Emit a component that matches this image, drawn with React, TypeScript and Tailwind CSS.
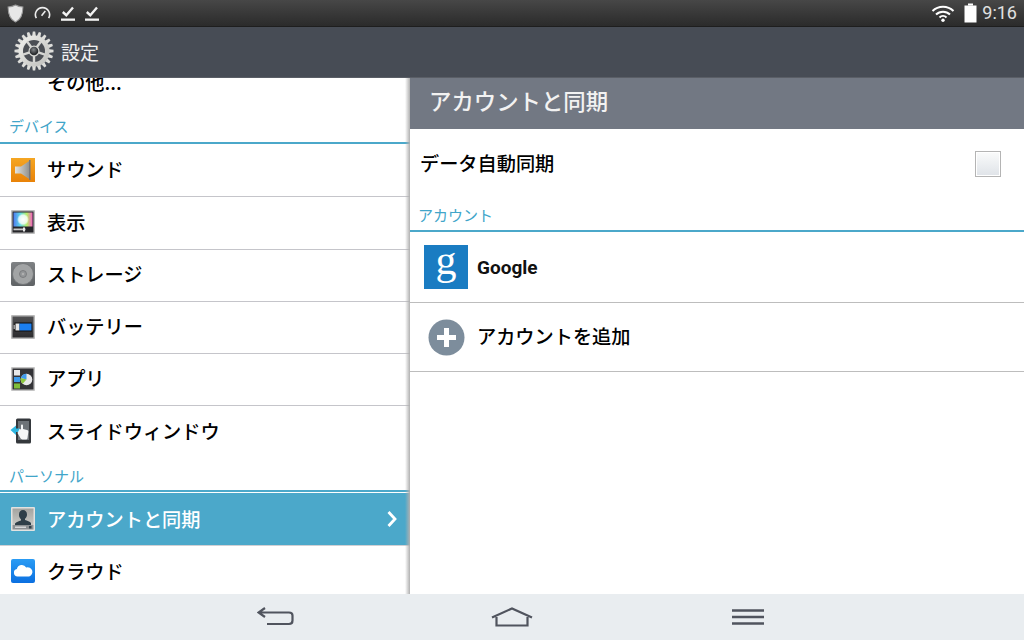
import { ReactNode } from "react"

const jp = "font-['Noto_Sans_CJK_JP','Noto_Sans',sans-serif]"

function IconFrame({ children }: { children: ReactNode }) {
  return (
    <svg width="26" height="26" viewBox="0 0 26 26" className="shrink-0">
      {children}
    </svg>
  )
}

function SoundIcon() {
  return (
    <IconFrame>
      <defs>
        <linearGradient id="snd" x1="0" y1="0" x2="0" y2="1">
          <stop offset="0" stopColor="#f5a623" />
          <stop offset="1" stopColor="#e98208" />
        </linearGradient>
        <linearGradient id="cone" x1="0" y1="0" x2="1" y2="0">
          <stop offset="0" stopColor="#e4e4e0" />
          <stop offset="1" stopColor="#8e8e8a" />
        </linearGradient>
      </defs>
      <rect x="1" y="1" width="24" height="24" fill="url(#snd)" />
      <path d="M5 9.500h6l9-6v19l-9-6H5z" fill="url(#cone)" />
      <rect x="19" y="3" width="1.500" height="20" fill="#77777a" />
    </IconFrame>
  )
}

function DisplayIcon() {
  return (
    <IconFrame>
      <defs>
        <linearGradient id="rb" x1="0" y1="0" x2="1" y2="0">
          <stop offset="0" stopColor="#4f7cf0" />
          <stop offset="0.35" stopColor="#5fd8e8" />
          <stop offset="0.7" stopColor="#b8f06a" />
          <stop offset="1" stopColor="#f45fc0" />
        </linearGradient>
        <radialGradient id="sun">
          <stop offset="0" stopColor="#ffffff" />
          <stop offset="0.7" stopColor="#ffffff" stopOpacity="0.8" />
          <stop offset="1" stopColor="#ffffff" stopOpacity="0" />
        </radialGradient>
      </defs>
      <rect x="1" y="1" width="24" height="24" fill="#bcbcbc" rx="1" />
      <rect x="2.500" y="2.500" width="21" height="21" fill="#26262a" />
      <rect x="3.500" y="3.500" width="19" height="14" fill="url(#rb)" />
      <circle cx="13" cy="10.500" r="6" fill="url(#sun)" />
      <rect x="3.500" y="19.500" width="12" height="1.800" fill="#c8c8c8" />
      <rect x="13" y="18.500" width="2" height="4" fill="#e8e8e8" />
    </IconFrame>
  )
}

function StorageIcon() {
  return (
    <IconFrame>
      <defs>
        <linearGradient id="hdd" x1="0" y1="0" x2="0" y2="1">
          <stop offset="0" stopColor="#7f8284" />
          <stop offset="1" stopColor="#5f6265" />
        </linearGradient>
      </defs>
      <rect x="1" y="1" width="24" height="24" fill="url(#hdd)" rx="2" />
      <circle cx="13" cy="13" r="10.500" fill="#a2a4a5" stroke="#6f7173" strokeWidth="0.800" />
      <circle cx="13" cy="13" r="3.500" fill="#949698" stroke="#737577" strokeWidth="0.800" />
      <circle cx="13" cy="13" r="1.200" fill="#b0b0b0" />
    </IconFrame>
  )
}

function BatteryIcon() {
  return (
    <IconFrame>
      <defs>
        <linearGradient id="bat" x1="0" y1="0" x2="0" y2="1">
          <stop offset="0" stopColor="#505052" />
          <stop offset="1" stopColor="#2c2c2e" />
        </linearGradient>
      </defs>
      <rect x="1" y="1" width="24" height="24" fill="#b9b9b9" rx="1" />
      <rect x="2.500" y="2.500" width="21" height="21" fill="url(#bat)" />
      <rect x="4.500" y="8.500" width="17.500" height="9" fill="#0f0f0f" />
      <rect x="3.500" y="11" width="1.500" height="4" fill="#9a9a9a" />
      <rect x="5.500" y="9.500" width="4" height="7" fill="#e5e5e5" />
      <rect x="9.500" y="9.500" width="12" height="7" fill="#1b7ff0" />
    </IconFrame>
  )
}

function AppsIcon() {
  return (
    <IconFrame>
      <rect x="1" y="1" width="24" height="24" fill="#c4c4c4" rx="1" />
      <rect x="2.500" y="2.500" width="21" height="21" fill="#333337" />
      <rect x="4" y="4" width="6" height="5.500" fill="#e8e8e8" />
      <rect x="4" y="11" width="6" height="5" fill="#3f9bec" />
      <rect x="4" y="17.500" width="6" height="5" fill="#7fbf3a" />
      <circle cx="16.500" cy="13.500" r="5.800" fill="#e8e8ea" />
      <path d="M16.500 13.500V7.700a5.800 5.800 0 0 0-5.600 4.300z" fill="#3f9bec" />
      <path d="M16.500 13.500l-5.600-1.500a5.800 5.800 0 0 0 1.800 5.800z" fill="#8cc63f" />
    </IconFrame>
  )
}

function SlideIcon() {
  return (
    <IconFrame>
      <rect x="6" y="0.500" width="15" height="25" fill="#34383c" rx="1.500" />
      <rect x="8" y="3" width="11" height="19" fill="#6d7378" />
      <path d="M0.500 12l5.500-4.500v3h4v3.500H6V17z" fill="#2fb6e0" />
      <path d="M9.500 11c1 0 1.500.5 1.500 1V7.500c0-1.500 2-1.500 2 0V11l4 1c1 .3 1.500 1 1.300 2l-.8 6c-.1 1-1 1.500-2 1.500h-3c-1 0-1.500-.5-2-1.200L7.500 15z" fill="#f4f6f7" />
    </IconFrame>
  )
}

function AccountIcon() {
  return (
    <IconFrame>
      <defs>
        <linearGradient id="acc" x1="0" y1="0" x2="0" y2="1">
          <stop offset="0" stopColor="#a4a4a0" />
          <stop offset="1" stopColor="#c8c8c4" />
        </linearGradient>
      </defs>
      <rect x="1" y="1" width="24" height="24" fill="#e2e2e0" rx="1" />
      <rect x="2.500" y="2.500" width="21" height="16.500" fill="url(#acc)" />
      <path d="M9 8.500c0-3 1.800-4.500 4-4.500s4 1.500 4 4.500c0 2-1 3.500-2 4.300v1.200c2 .8 5 1.400 6 3V19H5v-1.500c1-1.600 4-2.200 6-3v-1.200c-1-.8-2-2.300-2-4.300z" fill="#2f3f49" />
      <rect x="2.500" y="19" width="21" height="4.500" fill="#8c9093" />
      <rect x="5" y="20.500" width="11" height="1.500" fill="#d4d6d8" />
      <rect x="19" y="20" width="2.500" height="2.500" fill="#33434d" />
    </IconFrame>
  )
}

function CloudIcon() {
  return (
    <IconFrame>
      <defs>
        <linearGradient id="cld" x1="0" y1="0" x2="0" y2="1">
          <stop offset="0" stopColor="#2a9cf4" />
          <stop offset="1" stopColor="#0b6fe0" />
        </linearGradient>
      </defs>
      <rect x="1" y="1" width="24" height="24" fill="url(#cld)" rx="2" />
      <path d="M7.500 18.500a3.800 3.800 0 0 1-.6-7.500 5 5 0 0 1 9.300-1.500 4.500 4.500 0 0 1 3 9z" fill="#fff" />
    </IconFrame>
  )
}

function GearIcon() {
  const teeth = Array.from({ length: 20 }, (_, i) => (i * 360) / 20)
  return (
    <svg width="40" height="40" viewBox="0 0 40 40">
      <defs>
        <radialGradient id="hub" cx="0.450" cy="0.350">
          <stop offset="0" stopColor="#85888b" />
          <stop offset="1" stopColor="#2c2e31" />
        </radialGradient>
        <linearGradient id="rim" x1="0" y1="0" x2="1" y2="1">
          <stop offset="0" stopColor="#f2f2ef" />
          <stop offset="1" stopColor="#bdbdba" />
        </linearGradient>
      </defs>
      {teeth.map((a) => (
        <path key={a} d="M18 6l.8-5.500h2.400L22 6z" fill="#dededb" transform={`rotate(${a} 20 20)`} />
      ))}
      <circle cx="20" cy="20" r="15.500" fill="url(#rim)" />
      <circle cx="20" cy="20" r="11" fill="#4b4e54" />
      {[0, 72, 144, 216, 288].map((a) => (
        <rect key={a} x="18.800" y="8.500" width="2.400" height="10" fill="#d6d6d3" transform={`rotate(${a + 36} 20 20)`} />
      ))}
      <circle cx="20" cy="20" r="5.500" fill="#d6d6d3" />
      <circle cx="20" cy="20" r="4.300" fill="url(#hub)" />
    </svg>
  )
}

function StatusCheck() {
  return (
    <svg width="14" height="15" viewBox="0 0 14 15">
      <path d="M1.800 6l3.500 3.200L12 1.500" fill="none" stroke="#f2f2f2" strokeWidth="2.400" />
      <rect x="0" y="12.500" width="14" height="2.300" fill="#f2f2f2" />
    </svg>
  )
}

function SettingRow({ icon, label, selected }: { icon: ReactNode; label: string; selected?: boolean }) {
  return (
    <div
      className={
        selected
          ? "flex h-[53px] items-center border-b border-[#d0d0d4] bg-[#4ba8ca] px-[10px] text-white"
          : "flex h-[52.300px] items-center border-b border-[#c5c5ca] pb-[2px] pl-[10px] pr-[11px] text-black"
      }
    >
      {icon}
      <span className={`${jp} ml-[11px] flex-1 text-[19.200px] font-medium`}>{label}</span>
      {selected && (
        <svg width="14" height="18" viewBox="0 0 14 18">
          <path d="M2.500 2l6.500 7-6.500 7" fill="none" stroke="#fff" strokeWidth="2.800" />
        </svg>
      )}
    </div>
  )
}

function SectionHeader({ label, className }: { label: string; className: string }) {
  return (
    <div className={`${jp} ${className} flex items-center border-b-2 border-[#4ba8ca] text-[15px] text-[#41a5c9]`}>
      {label}
    </div>
  )
}

export default function App() {
  return (
    <div className={`${jp} flex h-[640px] w-[1024px] flex-col overflow-hidden bg-white`}>
      {/* Status bar */}
      <div className="flex h-[27px] items-center justify-between border-b border-[#1e1e1e] bg-gradient-to-b from-[#474747] to-[#2b2b2b] px-[7px]">
        <div className="flex items-center gap-[10px]">
          <svg width="17" height="19" viewBox="0 0 16 18">
            <path d="M8 1c2 1.200 4.500 1.800 7 1.800 0 6-1 11.500-7 14.200C2 14.300 1 8.800 1 2.800 3.500 2.800 6 2.200 8 1z" fill="#e8e8e8" stroke="#9a9a9a" />
          </svg>
          <svg width="17" height="14" viewBox="0 0 18 14">
            <path d="M2.500 12.500a7.500 7.500 0 1 1 13 0" fill="none" stroke="#ededed" strokeWidth="1.700" />
            <path d="M8 10l4-5" stroke="#ededed" strokeWidth="1.700" />
          </svg>
          <StatusCheck />
          <StatusCheck />
        </div>
        <div className="flex items-center">
          <svg width="24" height="18" viewBox="0 0 24 18">
            <path d="M1.500 7a15 15 0 0 1 21 0M5 10.500a10 10 0 0 1 14 0M8.500 13.500a5 5 0 0 1 7 0" fill="none" stroke="#fff" strokeWidth="2" />
            <circle cx="12" cy="16.300" r="1.700" fill="#fff" />
          </svg>
          <svg width="13" height="20" viewBox="0 0 13 20" className="ml-[9px]">
            <rect x="4" y="0.500" width="5" height="2" fill="#fff" />
            <rect x="0.500" y="2.500" width="12" height="17" fill="#fff" />
          </svg>
          <span className="ml-[5px] font-['Roboto',sans-serif] text-[18px] leading-none text-[#e0e0e0]">9:16</span>
        </div>
      </div>

      {/* Action bar */}
      <div className="flex h-[51px] items-center bg-[#474c55] pb-[3px] pl-[14px] shadow-[inset_0_-1px_0_#5a5e66]">
        <GearIcon />
        <span className="ml-[7px] text-[19px] leading-none text-[#f0f0f0]">設定</span>
      </div>

      <div className="flex flex-1 overflow-hidden">
        {/* Settings list */}
        <div className="relative w-[410px] shrink-0 overflow-hidden">
          <div className="mt-[-11px] flex h-[30px] items-center pl-[47px] text-[19.200px] font-medium text-black">その他...</div>
          <SectionHeader label="デバイス" className="mt-[16px] h-[31px] pb-[3px] pl-[9px]" />
          <div className="h-[1px]" />
          <SettingRow icon={<SoundIcon />} label="サウンド" />
          <SettingRow icon={<DisplayIcon />} label="表示" />
          <SettingRow icon={<StorageIcon />} label="ストレージ" />
          <SettingRow icon={<BatteryIcon />} label="バッテリー" />
          <SettingRow icon={<AppsIcon />} label="アプリ" />
          <div className="flex h-[51px] items-center pb-[2px] pl-[10px] text-black">
            <SlideIcon />
            <span className="ml-[11px] text-[19.200px] font-medium">スライドウィンドウ</span>
          </div>
          <SectionHeader label="パーソナル" className="h-[35px] pt-[4px] pl-[9px]" />
          <div className="h-[1px]" />
          <SettingRow icon={<AccountIcon />} label="アカウントと同期" selected />
          <SettingRow icon={<CloudIcon />} label="クラウド" />
          <div className="absolute inset-y-0 right-0 w-[5px] bg-gradient-to-r from-transparent to-[#b0b0b0]" />
        </div>

        {/* Account panel */}
        <div className="flex-1">
          <div className="flex h-[51px] items-center bg-[#727883] pb-[7px] pl-[19px] text-[22.400px] font-medium leading-none text-[#f2f2f2]">
            アカウントと同期
          </div>
          <div className="flex h-[69px] items-center justify-between pl-[10px] pr-[23px] text-[19.200px] font-medium text-black">
            データ自動同期
            <div className="h-[26px] w-[26px] border border-[#b4b4b4] bg-gradient-to-b from-[#fafbfb] to-[#dfe3e8] shadow-[inset_0_0_0_1px_#fff]" />
          </div>
          <SectionHeader label="アカウント" className="h-[34px] pl-[8px] pt-[3px]" />
          <div className="flex h-[71px] items-center border-b border-[#bdbdbd] pl-[14px]">
            <svg width="44" height="44" viewBox="0 0 44 44">
              <rect width="44" height="44" fill="#1a7cc2" />
              <text x="22" y="29" textAnchor="middle" fontFamily="Liberation Serif" fontSize="42" fill="#fff">g</text>
            </svg>
            <span className="ml-[9px] pt-[3px] font-['Roboto',sans-serif] text-[19px] font-bold text-[#111]">Google</span>
          </div>
          <div className="flex h-[69px] items-center border-b border-[#bdbdbd] pl-[18px]">
            <svg width="37" height="37" viewBox="0 0 37 37">
              <circle cx="18.500" cy="18.500" r="18" fill="#7d8d9c" />
              <path d="M18.500 9v19M9 18.500h19" stroke="#fff" strokeWidth="5" />
            </svg>
            <span className="ml-[12px] pb-[1px] text-[19.200px] font-medium text-black">アカウントを追加</span>
          </div>
        </div>
      </div>

      {/* Navigation bar */}
      <div className="flex h-[46px] items-center justify-center bg-[#e9edf0]">
        <div className="flex w-[236px] justify-center">
          <svg width="38" height="20" viewBox="0 0 38 20">
            <path d="M8 1L1.500 5.500 8 10M2 5.500h30c2.500 0 3.500 1 3.500 3v5c0 2-1 3.500-3.500 3.500H10" fill="none" stroke="#50545e" strokeWidth="2.200" />
          </svg>
        </div>
        <div className="flex w-[236px] justify-center">
          <svg width="42" height="20" viewBox="0 0 42 20">
            <path d="M1 10.500L21 1.500l20 9M5.500 10v8.500h31V10" fill="none" stroke="#50545e" strokeWidth="2.200" />
          </svg>
        </div>
        <div className="flex w-[236px] justify-center">
          <svg width="34" height="18" viewBox="0 0 34 18">
            <path d="M1 2.500h32M1 9h32M1 15.500h32" fill="none" stroke="#50545e" strokeWidth="2.400" />
          </svg>
        </div>
      </div>
    </div>
  )
}
